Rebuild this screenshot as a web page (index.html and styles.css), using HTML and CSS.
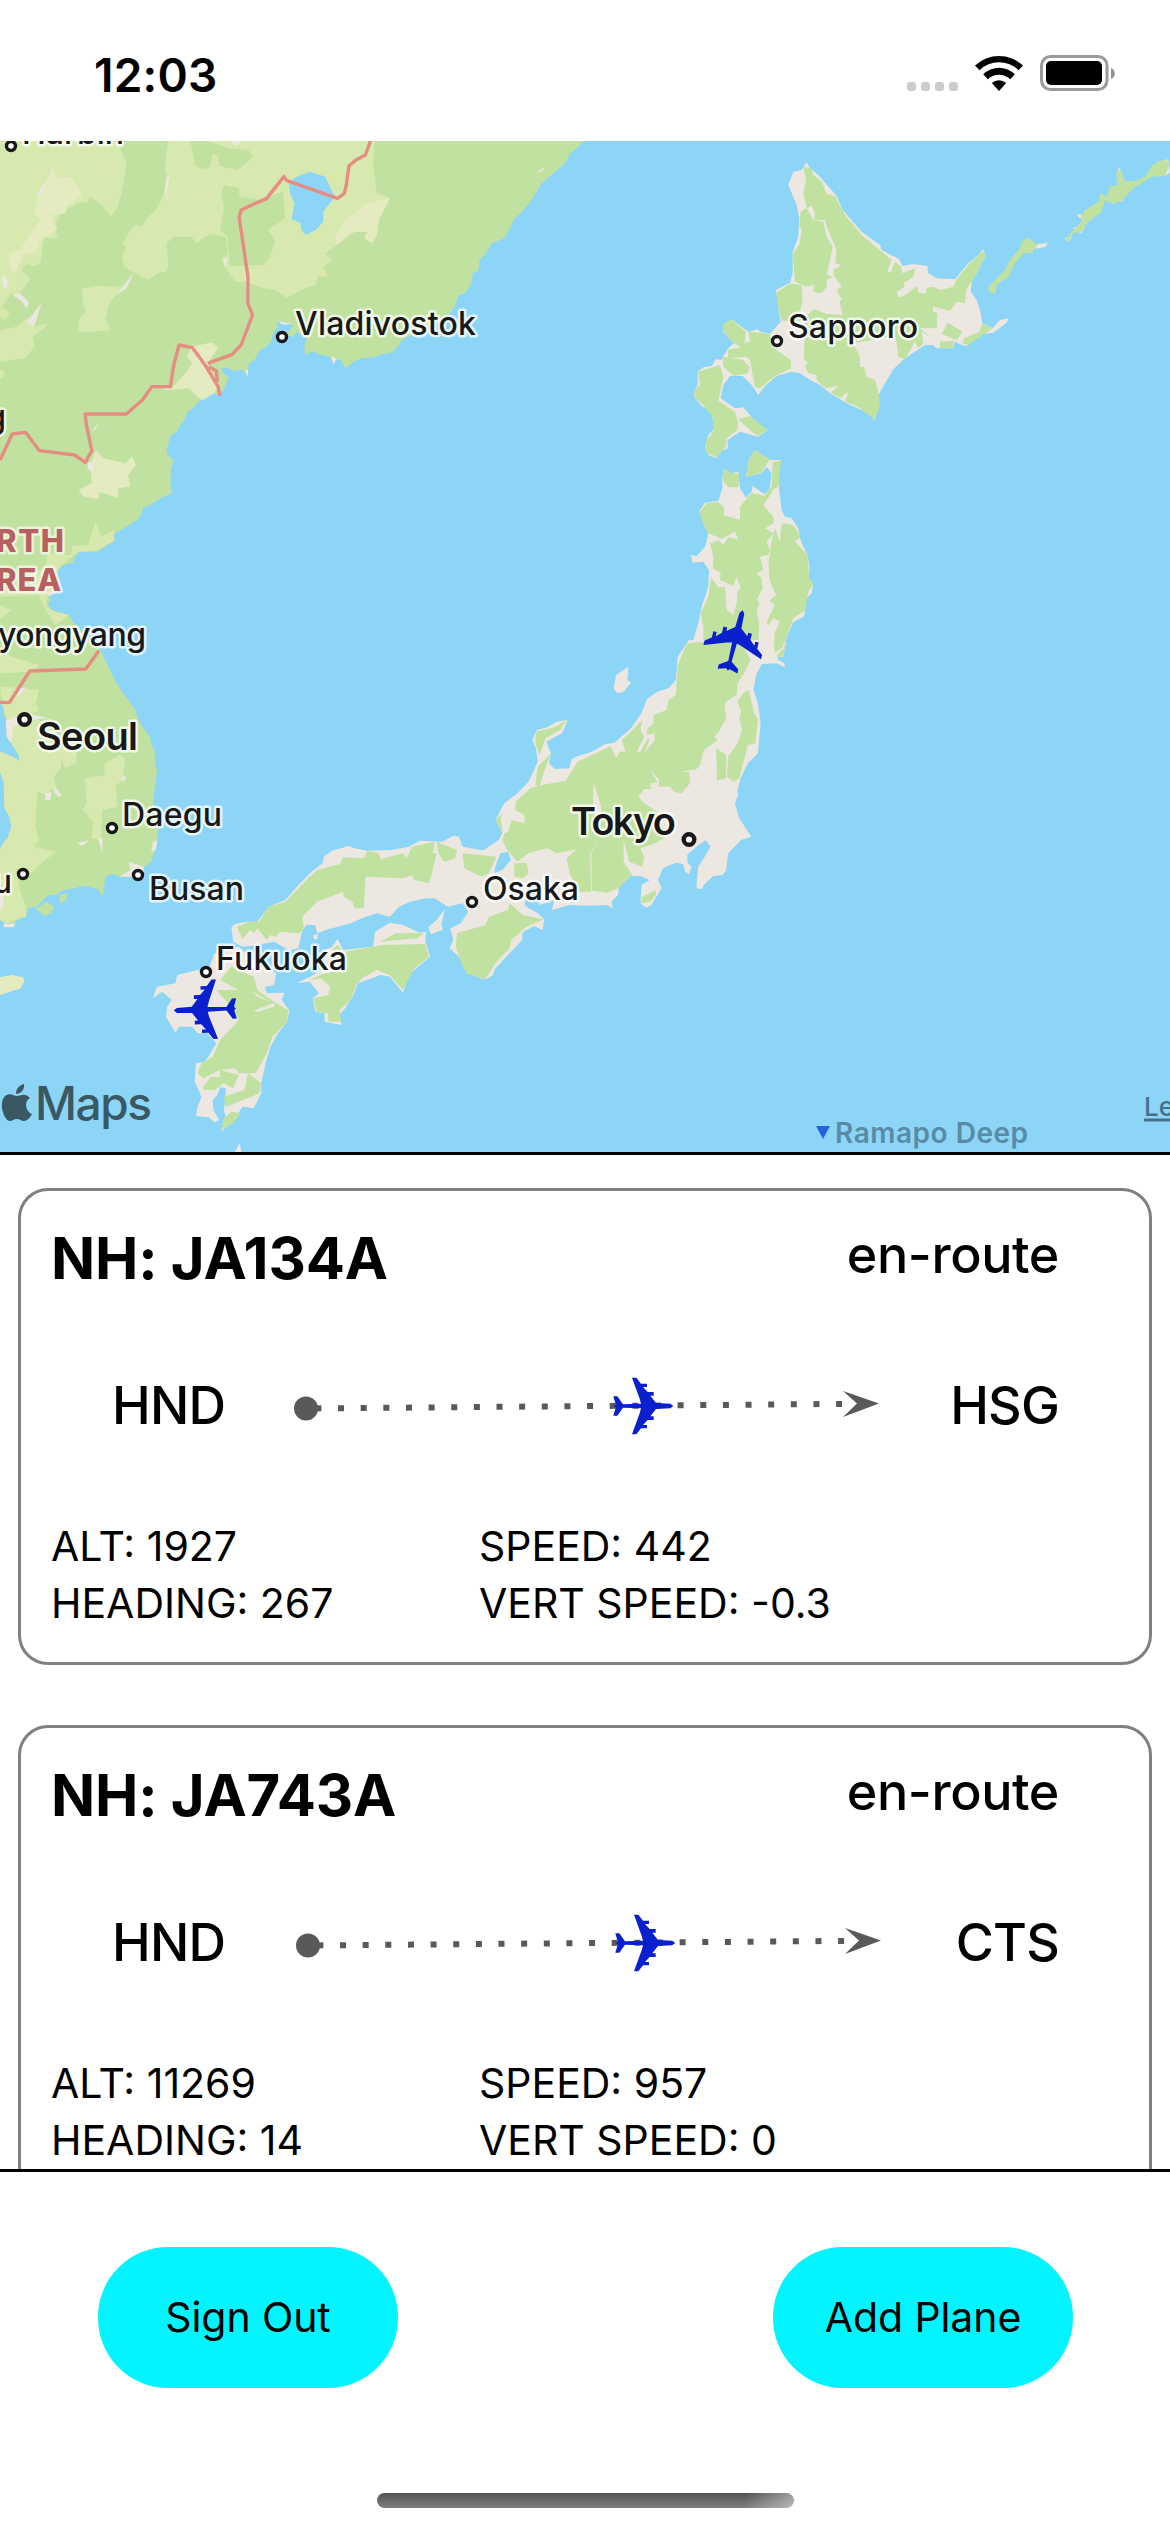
FILE: index.html
```html
<!DOCTYPE html>
<html lang="en">
<head>
<meta charset="utf-8">
<title>Flight Tracker</title>
<link rel="stylesheet" href="styles.css">
</head>
<body>
<svg class="defs" width="0" height="0" aria-hidden="true">
  <symbol id="plane" viewBox="-96 -96 192 192">
    <path d="M91 0L82-7L39-9L22-31H32V-42H14L0-57H12V-67H-6L-20-85H-33L-10-22L-6-7L-60-5L-77-29H-89L-82-5L-87 0L-82 5L-89 29H-77L-60 5L-6 7L-10 22L-33 85H-20L-6 67H12V57H0L14 42H32V31H22L39 9L82 7Z"/>
  </symbol>
  <symbol id="route" viewBox="0 0 590 60">
    <circle class="route-mark" cx="13" cy="32.500" r="12"/>
    <path class="route-line" d="M22.400 32.400L551 27.900"/>
    <path class="route-mark" d="M550 15L586 27.500L550 41L564 27.500Z"/>
    <use class="plane" href="#plane" x="318" y="-2" width="64" height="64"/>
  </symbol>
</svg>
<div class="app">
  <header class="status-bar">
    <span class="time">12:03</span>
    <svg class="status-icons" viewBox="0 0 210 40">
      <g class="signal"><rect x="1" y="28" width="9" height="9" rx="3"/><rect x="15" y="28" width="9" height="9" rx="3"/><rect x="29" y="28" width="9" height="9" rx="3"/><rect x="43" y="28" width="9" height="9" rx="3"/></g>
      <path d="M69 11.500A35 35 0 0 1 117 11.500L112.500 16.200A28 28 0 0 0 73.500 16.200ZM77.200 20.300A22.500 22.500 0 0 1 108.800 20.300L104.200 25.200A16 16 0 0 0 81.800 25.200ZM85.800 29A11 11 0 0 1 100.200 29L93 37Z"/>
      <rect class="battery-shell" x="135.500" y="2.500" width="65.500" height="33" rx="9"/>
      <rect x="140" y="7" width="56" height="24" rx="5"/>
      <path class="battery-tip" d="M205 14C210 16 210 23 205 25Z"/>
    </svg>
  </header>

  <section class="map">
    <svg class="map-canvas" viewBox="0 141 1170 1011">
      <!-- continental coast, borders and lake -->
      <g transform="translate(0 130) scale(.38265 .33333)">
        <path class="forest" d="M0 0H1550L1527 33L1487 75L1478 98L1450 125L1412 165L1400 190L1388 212L1360 250L1345 265L1330 300L1318 325L1285 340L1270 370L1253 390L1250 422L1235 430L1232 462L1215 490L1198 497L1190 525L1180 545L1150 570L1100 600L1050 630L1040 650L1022 668L1000 672L975 682L945 685L920 698L905 714L897 706L893 692L880 685L872 700L862 680L830 672L818 662L798 675L795 650L802 625L775 605L765 620L745 615L765 590L760 580L740 580L725 572L728 590L715 605L708 635L695 650L677 663L665 690L650 700L647 740L635 720L610 722L590 712L577 715L585 730L598 745L585 775L575 797L560 790L540 792L530 810L520 812L505 835L490 845L480 875L470 885L462 907L447 915L440 940L435 960L438 975L453 990L447 1020L445 1065L450 1080L445 1093L425 1100L405 1115L385 1130L375 1130L370 1150L360 1168L330 1190L298 1212L300 1230L275 1250L255 1265L208 1265L195 1282L190 1298L165 1305L148 1325L155 1350L150 1385L125 1400L132 1408L125 1425L135 1440L180 1455L190 1475L205 1490L225 1525L255 1560V1590H0Z"/>
        <path class="meadow" d="M0 33H325L315 60L330 95L325 150L310 225L290 262L270 230L235 200L230 215L200 220L160 250L140 290L152 325L115 325L105 400L90 410L70 400L55 420L80 445L65 470L45 495L30 488L5 530L25 550L15 570L0 560ZM440 33H980L975 100L985 190L1020 203L990 270L985 315L935 300L880 345L850 370L868 390L845 410L858 438L830 440L825 465L795 475L750 503L720 480L690 475L640 455L615 455L590 415L580 390L595 370L590 320L555 312L535 320L515 340L500 320L455 320L435 340L440 410L430 430L420 425L385 450L325 410L318 380L330 350L320 340L350 285L370 290L385 265L410 235L440 160L430 110ZM215 475L250 468L320 470L285 520L275 570L290 600L205 608V570L225 545L215 510ZM0 600L45 590L75 560L90 590L125 580L115 595L85 620L90 650L65 685L0 695ZM0 720L12 725L10 740L0 750ZM250 1175L265 1220L300 1200L295 1235L250 1262L205 1265L160 1305L148 1325L120 1310L125 1270L185 1275L190 1248L230 1245ZM120 1310L150 1330L150 1385L125 1400L120 1430L145 1445L180 1455L145 1485L120 1440L100 1395L0 1400V1380L90 1375L70 1340Z"/>
        <path class="meadow" d="M0 1425L30 1440L0 1470ZM0 1500L70 1530L45 1560H0Z"/>
        <path class="forest" d="M497 33H540L600 55L650 60L660 80L635 108L618 120L575 108L568 75L555 72L550 110L530 118L510 108ZM585 165L625 175V200L680 210L740 185L745 265L700 300L720 330L705 380L690 405L600 408L595 320L575 300L585 235L578 190Z"/>
        <path class="steppe" d="M138 110L150 145L185 140L215 195L175 230L170 250L135 255L150 300L110 325L95 365L60 375L40 430L25 415L22 375L55 355L75 320L105 270L90 250L95 215L110 180ZM880 345L875 320L905 270L950 225L1020 203L990 270L985 315L972 340L952 325L960 305L920 305ZM488 680L500 650L555 637L570 655L548 690L545 700L570 770L560 790L530 810L515 800L495 775L445 780L485 730L502 700ZM250 960L270 985L330 1000L345 978L355 1005L335 1035L340 1070L310 1075L308 1105L260 1085L258 1108L220 1100L205 1080L240 1060L235 1010Z"/>
        <path class="plain" d="M5 435L20 450L18 478L8 470ZM32 495L50 488L75 515L70 537L58 515ZM70 575L88 550L108 520L95 570L88 592ZM300 497L350 430L330 475ZM435 145L445 130L440 160L435 210L430 180ZM585 380L592 390L590 415L585 405ZM95 195L122 150L115 180L105 197ZM230 1000L248 990L240 1028L228 1015ZM865 680L880 685L872 703ZM640 720H648V742ZM725 572L765 582L740 584ZM425 778L440 768L445 780ZM600 33H630L618 48ZM1400 130L1425 108L1415 125ZM115 1385L150 1385L130 1398ZM238 908L258 875L250 898Z"/>
        <path class="water" d="M755 160L775 140L810 125L850 140L862 170L875 200L845 245V275L825 300L800 315L788 300L785 278L762 268L770 220L758 190Z"/>
        <path class="border" d="M968 33L955 75L930 90L912 108L905 165L900 190L882 205L750 152L742 140L697 205L630 240L625 262L648 440V520L660 555L630 645L607 673L543 700M0 990L32 912L67 907L103 962L195 975L223 997L240 962L225 880L223 852H330L372 810L397 770H445L455 700L468 645L503 653L540 712L570 770L575 797M545 710L565 722L568 755"/>
      </g>
      <!-- Korean peninsula and western Japan -->
      <g transform="translate(0 640) scale(.37309 .33333)">
        <path class="forest" d="M0 0H255L270 32L282 60L310 125L330 160L362 207L370 240L385 265L402 290L405 310L415 335V360L421 395L415 440L410 490L425 560L422 600L415 635L405 665L385 680V710H350L320 710L300 702L282 710L280 735L275 768L265 750L240 740L220 738L200 745L170 750L150 765H130L115 780L98 800L75 805L70 828L50 835L40 848L15 852L0 840V630L5 615L20 595L30 560L25 530L12 505L10 430L0 395V335L35 350L52 362L50 345L30 310L18 290L20 245L10 225L8 200L0 190ZM95 808L125 785L145 800L138 820L120 828ZM160 765L180 760L178 780L160 792Z"/>
        <path class="meadow" d="M0 20L30 50L105 75L90 95L0 100ZM0 140H40L30 160L60 145L105 150L95 190L105 210L65 235H100L205 330V370L175 385L162 350L165 380L145 410L150 440L125 460L100 455L95 560L105 600L90 620L150 635L100 680L95 690L50 720L55 760L70 800V830L15 850L0 840V630L5 615L20 595L30 560L25 530L12 505L10 430L0 395V335L35 350L52 362L50 345L30 310L18 290L20 245L8 200ZM280 370L320 345L335 355L330 415L310 440L315 500L275 510L270 600L245 595L250 545L222 510L232 490L228 415L280 405Z"/>
        <path class="plain" d="M15 240L75 220L130 235L95 238L35 260L30 310L18 290ZM320 710L350 690L345 665L385 680V710ZM148 440L165 465L158 472L143 455ZM90 448L125 460L138 455L135 480H122L120 462ZM330 408L340 412L325 430ZM262 595L275 595V638ZM410 605L422 600L418 630L405 635ZM0 765H10L8 800L0 815ZM10 852L40 850L38 862H10ZM35 150L70 142L50 170ZM207 608L240 600L220 618Z"/>
        <path class="steppe" d="M0 1012L30 1005L62 1012L66 1022L55 1045L0 1065Z"/>
        <path class="border" d="M0 187L25 188L80 93L230 87L265 32"/>
        <path class="plain" d="M1290 630L1240 620L1230 590L1215 587L1185 605L1125 602L1095 620L1050 630L985 632L950 625L935 618L890 632L868 650L865 670L835 695L800 735L765 780L720 800L690 845H660L630 852L620 862L625 905L650 920L690 915L735 905L750 915L775 930L800 925L808 880L820 855H845L850 880L880 868L940 850L970 835L1010 820L1045 830L1070 800L1100 785L1140 775H1165L1200 800L1240 790L1255 815L1235 850L1207 865L1215 900L1205 925L1230 950L1250 995L1300 1018L1400 900V640ZM1193 808L1183 850L1187 870L1155 882L1148 862L1170 840ZM840 885L852 882L850 900L840 895ZM905 897L920 930L1000 920L1005 875L1045 848L1080 855L1125 878L1142 875L1140 905L1153 950L1110 990L1095 1010L1080 1058L1045 1010L1020 1005L960 1030L945 1070L925 1105L910 1125L915 1155L870 1145V1120L845 1115L838 1075L855 1060L830 1025L795 1030L840 1005L870 980V930L890 920ZM575 940L640 920L700 980L740 1000L735 1035L710 1040L715 1060L762 1058L755 1080L775 1110L770 1145L745 1180L725 1220L712 1270L700 1330V1360L680 1405L650 1400L620 1450L592 1475L605 1430L600 1410L605 1370V1345L590 1342L582 1365L570 1380L572 1410L588 1440L575 1447L560 1432L525 1428L530 1400L540 1370L522 1325L525 1270L550 1265L580 1210L555 1180H530L515 1160H480L470 1178L445 1130L448 1100L460 1080L435 1055L410 1075L420 1040L470 1030L475 1005L530 990L560 985ZM628 1540L642 1508L648 1540Z"/>
        <path class="forest" d="M695 845L720 800L765 785L830 710L850 690L912 672L920 652L975 655L985 632L1015 640L1020 658L1080 640L1090 655L1105 620L1165 605L1160 640H1170L1160 690L1150 730L1110 720L1105 705L1080 715L980 710L975 805H950L945 785L920 770V755L850 785L810 830L815 870L800 880L750 875L740 890L725 885L715 900L690 865L680 880L670 870L650 898L635 860L670 845ZM1170 605L1225 630L1220 655L1190 665L1175 640ZM1240 640L1330 650L1310 700L1290 710L1245 685ZM1225 880L1300 855L1310 830L1365 810L1370 790L1400 825L1458 838L1410 860L1370 900L1365 925L1330 965L1300 1018L1250 1000L1230 950L1222 920ZM925 935L1025 915L1140 912L1150 950L1110 985L1080 1050L1045 1005L1010 990L970 1015L955 1035L940 1080L910 1110L915 1145H880V1120L848 1115L840 1075L880 1065L885 1040L860 1015L830 1020L870 1000L925 990ZM1020 905L1060 880H1135L1120 895ZM890 930L905 915L915 930ZM590 1020L620 980L680 1010L690 1050L740 1090L772 1110L770 1145L730 1190L715 1240L685 1300H640L630 1285L590 1290L545 1315L530 1300L540 1270L570 1250L590 1200L640 1140L620 1100L580 1050L640 1050ZM545 1340L565 1310L590 1312L590 1290L640 1305L625 1345L600 1330L575 1350H545ZM665 1300L700 1330L695 1360L640 1385L605 1400L600 1370L655 1350ZM600 1435L620 1415L645 1420L625 1450L592 1472Z"/>
        <path class="plain" d="M680 1112L735 1088V1100L690 1116ZM670 1050L725 1085L690 1070Z"/>
      </g>
      <!-- Hokkaido, Tohoku and the Kurils -->
      <g transform="translate(660 130) scale(.33333)">
        <path class="plain" d="M440 97L447 110L480 140L530 198L548 240L605 305L660 345L665 360L718 388L728 408L758 402L802 408L805 430L830 445L885 448L925 400L955 375L970 358L977 378L955 420L935 455L932 485L950 510L960 540L967 580L998 595L1020 570L1045 565L1040 578L1000 608L960 612L920 648L905 645L885 635L880 655H830L820 645H795L735 685L700 718L675 760L655 795L658 830L643 870L630 852L560 820L510 790L480 765L455 752L420 730L395 725L350 738L315 768L295 795L275 765L248 738L210 738L190 765L182 805L225 835L250 832L290 878L323 900L295 920L240 905L203 930V955L180 965L170 985L145 975L135 950L145 915L160 900V870L150 840L128 830L102 800L103 785L113 765V725L130 712L155 708L168 687L183 690L205 655L222 640L190 605L192 582L215 568L265 605L293 598L300 605L330 612L362 575L355 530L348 480L390 458L398 430V365L415 320L418 265L410 225L385 165L400 125L425 120ZM192 1018L212 1030L235 1025L240 1075L258 1103L275 1085L278 1068L312 1092L328 1080L335 1030L320 1010L305 1030L258 1040L268 985L285 960L330 990H363L355 1025L358 1085L365 1140L375 1160L395 1165L415 1195L420 1225L430 1250L443 1275L448 1310L445 1350L460 1362L455 1390L440 1405L432 1460L400 1475L380 1520L370 1580H75L77 1555L100 1530L115 1480L125 1430L145 1370L147 1320L130 1295L98 1298L93 1275L110 1278L135 1250L145 1212L130 1170L118 1143L135 1118L175 1112L187 1075V1040ZM1120 344L1163 338L1158 350L1130 356ZM1213 325L1235 320L1225 336ZM1250 255L1265 252L1262 266ZM1370 125L1378 113L1385 130ZM1490 95L1525 88L1530 128L1515 138ZM1240 292L1275 290L1265 308L1245 305ZM1370 205L1392 208L1385 216Z"/>
        <path class="forest" d="M430 110L455 115L460 135L485 155L500 192L525 198L555 255L605 315L695 390L682 425L692 428L705 395L722 408L728 430L765 415L760 440L730 460L735 470L710 485L715 500H728L772 468L775 490H798L800 473L820 470L840 480L880 470L890 448L930 400L970 362L977 378L935 455L920 475L915 520L890 515L870 542L820 530L818 545L832 550L830 595H780L815 625L785 605L790 640L775 655L765 635L735 688L715 680L710 640L690 560L690 620L580 640L600 680V710H612L620 740L645 750L658 800V835L643 868L590 828L555 815L565 785L540 805L512 788L535 768L495 775L470 750V735L445 730L435 710L442 695L432 690L435 560L462 537L500 552L548 555L538 515L545 508L530 480L545 470L520 435V420L545 405L525 400L530 360L500 290L495 270H462L465 250L455 228L440 235L430 190L438 150ZM422 245L440 233L460 270L490 275L500 320L518 350L510 390L500 435L518 440L500 450V470L485 490L460 485L462 465L440 470L405 455L398 370L418 345L425 300L418 285ZM348 490L390 460L425 465L428 510L420 545L425 572H365L355 530ZM190 582L215 568L258 605L253 640L270 635L265 605L330 612L335 650L392 690L393 715L345 738L300 775L285 772L278 735L270 690L260 680L205 685L203 660L242 652L222 640L192 605ZM187 680L250 690L270 712L262 730L220 738L190 710ZM115 725L180 705L190 740L175 812L225 845L235 880L232 900L200 925L198 950L170 982L140 970L137 935L160 905L158 860L130 825L103 800L105 780L120 765ZM235 868L270 858L322 900L295 918L275 905ZM863 578L908 605L890 630L845 612ZM840 635L882 632L880 655H840ZM965 580L998 595L925 645L908 640L912 625L960 605ZM985 470L1035 420L1050 390L1080 355L1085 335L1102 322L1133 345L1115 368L1090 370L1065 400L1045 440L1010 465L1005 490L988 488ZM1215 330L1225 335L1240 308L1265 305L1280 280L1325 245L1335 210L1360 222L1385 212L1420 175L1475 140L1515 138L1528 105L1520 90L1500 92L1478 105L1455 140L1425 153H1393L1385 122L1370 120V150L1375 165L1350 170L1340 200L1320 190L1315 215L1275 240L1262 260L1265 275L1240 300Z"/>
        <path class="forest" d="M190 1018L212 1030L238 1030L235 1072H205L188 1050ZM268 985L285 960L328 990L305 1028L258 1040ZM338 995L363 992L355 1070L340 1078L328 1100L310 1125L340 1160L342 1180L315 1195L340 1210L320 1235L330 1260L325 1275L300 1280L310 1320L290 1330L305 1345L308 1375L290 1410L298 1415L290 1450L298 1480L292 1580H75L85 1540H130V1490L122 1450L145 1400L153 1342L175 1372L195 1370L200 1440L220 1455L232 1410L230 1385L242 1375L230 1340L220 1368L180 1350L182 1328L158 1315L160 1280L150 1240L175 1230L190 1245L205 1222L235 1228L225 1205L185 1227L145 1210L128 1180L120 1145L140 1120L175 1115L193 1135L190 1155L240 1170V1130L275 1088L312 1098L335 1068ZM365 1180L400 1185L422 1220L405 1235L443 1275L447 1340L460 1362L445 1385L435 1440L400 1465L380 1520L370 1580H345L343 1512L360 1475L340 1465L325 1487L320 1475L345 1425L328 1412L348 1395L328 1350L325 1300L335 1230L345 1195L360 1235Z"/>
      </g>
      <!-- central Honshu -->
      <g transform="translate(480 640) scale(.37309 .33333)">
        <path class="plain" d="M818 0L815 25L795 45L800 60L815 70L818 83L795 70L755 72L740 105L733 150L745 190L752 250L745 340L718 370L700 410L690 450L692 465L683 490L695 535L727 590L700 600L665 640L660 690L650 705L625 708L600 735L595 747L580 745L585 680L600 655L618 620L605 600L580 620L555 645L557 670L567 680L560 703L550 695L545 672L525 668L490 685L477 720L487 745L470 775L460 795L445 803L430 790L433 735L455 720L430 708H405L372 742L370 765L352 785L357 805L340 795L290 797L240 795L192 810L200 780L160 795L145 730L125 740L120 797L155 820L172 838L168 870L145 858L125 870L88 895L80 920L60 945L45 970L35 1005L15 1018L0 1015L-20 900V635L10 630L50 600L60 580L42 540L65 490L100 460L130 425L155 365L150 325L140 300L152 270L180 262L205 245L235 240L220 280L178 305L190 340L185 370L200 387L240 385L245 358L262 348L300 335L335 312L360 308L405 265L435 215L447 178L475 155L505 145L525 120L530 50L560 0ZM398 80L395 120L405 128L385 155L368 160L358 145L365 105Z"/>
        <path class="forest" d="M555 10L600 5H700L725 60L708 100L690 130L688 165L660 185L655 205L660 235L640 275L628 290L638 300L600 330L590 375L580 388L535 395L560 395L563 430L540 460L520 455L510 440H478L480 420L455 388L475 425L455 432L460 447H440L425 470L440 490L475 515L480 530L500 590L470 610L430 625L440 650L435 680L400 665L385 600V665L408 705L370 745L340 758L300 752L298 640L318 600L295 640L298 755H265L240 700L232 655L258 628L205 640L180 625L130 640L100 665L70 625L60 600L65 580L75 575L85 540L120 550L118 525L95 510V485L135 445L165 435L230 422L262 365L350 318L365 355L375 335H390L380 300L400 280L435 240L430 270L440 290L420 335L430 335L450 295L455 300L440 340L468 300V280L445 285L450 265L465 250V225L500 210L505 180L525 165L530 75ZM720 150L735 220L745 240L738 310L718 315L695 415L680 425L662 410L665 350L690 310L702 270L695 235L700 215L690 185L705 160ZM633 325L660 345V415L635 422ZM788 0H818L810 25L790 38ZM435 770L470 750L472 765L455 785L430 790ZM150 275L200 262L232 240L215 270L175 295L160 345L148 310ZM190 340L170 400L160 440L148 435L155 380ZM42 540L65 515L55 535L62 580ZM92 670L125 668L130 700L115 715L92 710ZM-46 640L44 650L24 700L4 710L-41 685ZM-61 880L14 855L24 830L75 810L80 790L114 825L172 838L124 860L84 900L79 925L44 965L14 1018L-36 1000L-56 950Z"/>
        <path class="plain" d="M305 430L325 500L320 570L303 500Z"/>
        <path class="water" d="M55 640L75 635L83 660L60 690L38 700L42 675Z"/>
      </g>

      <g class="dots">
        <circle cx="11" cy="146" r="4.500"/><circle cx="282" cy="337" r="4.500"/><circle cx="777" cy="341" r="4.500"/>
        <circle cx="112" cy="828" r="4.500"/><circle cx="138" cy="875" r="4.500"/><circle cx="23" cy="874" r="4.500"/>
        <circle cx="472" cy="902" r="4.500"/><circle cx="206" cy="972" r="4.500"/>
        <circle class="capital" cx="24.500" cy="719.500" r="5.300"/><circle class="capital" cx="689" cy="839.500" r="5.300"/>
      </g>
      <g class="city">
        <text x="22" y="144" textLength="102">Harbin</text>
        <text x="295" y="335" textLength="181">Vladivostok</text>
        <text x="788" y="338" textLength="130">Sapporo</text>
        <text x="6" y="428" text-anchor="end">g</text>
        <text x="-2" y="646" textLength="148">yongyang</text>
        <text x="122" y="826" textLength="100">Daegu</text>
        <text x="149" y="900" textLength="95">Busan</text>
        <text x="12" y="893" text-anchor="end">u</text>
        <text x="483" y="900" textLength="96">Osaka</text>
        <text x="216" y="970" textLength="131">Fukuoka</text>
        <text class="big" x="37" y="750" textLength="101">Seoul</text>
        <text class="big" x="571" y="835" textLength="105">Tokyo</text>
      </g>
      <g class="country">
        <text x="-4" y="552" textLength="68">RTH</text>
        <text x="-4" y="591" textLength="65">REA</text>
      </g>
      <path class="trench" d="M816 1126H830L823 1139Z"/>
      <text class="sea" x="835" y="1143" textLength="193">Ramapo Deep</text>
      <g class="brand">
        <path d="M24 1084C25 1090 20 1094 16 1094C16 1088 20 1085 24 1084ZM30 1098C24 1101 25 1111 32 1114C30 1118 27 1121 24 1121C21 1121 20 1119 17 1119C14 1119 12 1121 10 1121C4 1121-2 1103 5 1096C10 1092 14 1096 17 1096C20 1096 25 1092 30 1098Z"/>
        <text x="35" y="1120" textLength="117">Maps</text>
      </g>
      <text class="legal" x="1144" y="1116">Legal</text>
      <path class="legal-line" d="M1144 1120H1170"/>
      <use class="plane" href="#plane" x="-33.500" y="-33.500" width="67" height="67" transform="translate(735 641) rotate(-76)"/>
      <use class="plane" href="#plane" x="-33.500" y="-33.500" width="67" height="67" transform="translate(205.500 1009.500) rotate(178)"/>
    </svg>
  </section>

  <main class="flights">
    <article class="card">
      <div class="card-head"><h2>NH: JA134A</h2><span class="state">en-route</span></div>
      <div class="route"><span>HND</span><svg class="route-art"><use href="#route"/></svg><span>HSG</span></div>
      <div class="stats"><span>ALT: 1927</span><span>SPEED: 442</span><span>HEADING: 267</span><span>VERT SPEED: -0.3</span></div>
    </article>
    <article class="card">
      <div class="card-head"><h2>NH: JA743A</h2><span class="state">en-route</span></div>
      <div class="route"><span>HND</span><svg class="route-art"><use href="#route"/></svg><span>CTS</span></div>
      <div class="stats"><span>ALT: 11269</span><span>SPEED: 957</span><span>HEADING: 14</span><span>VERT SPEED: 0</span></div>
    </article>
  </main>

  <footer class="actions">
    <div class="buttons"><button>Sign Out</button><button>Add Plane</button></div>
    <div class="home-indicator"></div>
  </footer>
</div>
</body>
</html>
```
FILE: styles.css
```css
* { box-sizing: border-box; }
body { margin: 0; background: #fff; color: #000; font-family: Inter, "Liberation Sans", sans-serif; }
.defs { display: block; }
.app { width: 1170px; height: 2532px; display: flex; flex-direction: column; overflow: hidden; }

.status-bar { height: 141px; flex: none; padding: 0 54px 0 94px; display: flex; align-items: center; justify-content: space-between; }
.time { font-size: 46px; font-weight: 600; line-height: 56px; padding-top: 8px; letter-spacing: .2px; }
.status-icons { width: 210px; height: 40px; margin-top: 7px; }
.signal { fill: #ccc; }
.battery-shell { fill: none; stroke: #9b9b9b; stroke-width: 3; }
.battery-tip { fill: #8f8f8f; }

.map { height: 1014px; flex: none; border-bottom: 3px solid #000; background: #8dd5f6; }
.map-canvas { display: block; width: 1170px; height: 1011px; overflow: hidden; }
.forest { fill: #c1e1a0; }
.meadow { fill: #d7e9af; }
.steppe { fill: #e4ebc0; }
.plain { fill: #ece8e1; }
.water { fill: #8dd5f6; }
.border { fill: none; stroke: #e58d83; stroke-width: 3.4; stroke-linejoin: round; vector-effect: non-scaling-stroke; }
.plane { fill: #0a1fce; }
.dots circle { fill: #fff; stroke: #181818; stroke-width: 3.4; }
.dots .capital { stroke-width: 4.4; }
.city text { font-size: 32px; font-weight: 500; fill: #181818; stroke: rgba(255,255,255,.75); stroke-width: 5; stroke-linejoin: round; paint-order: stroke; }
.city .big { font-size: 38px; font-weight: 600; }
.country text { font-size: 31px; font-weight: 800; fill: #b86060; stroke: rgba(255,255,255,.65); stroke-width: 5; stroke-linejoin: round; paint-order: stroke; }
.trench { fill: #2463e0; }
.sea { font-size: 28px; font-weight: 600; fill: #588ba6; }
.brand { fill: #3a5864; }
.brand text { font-size: 46px; font-weight: 500; }
.legal { font-size: 26px; font-weight: 500; fill: #44718a; }
.legal-line { stroke: #44718a; stroke-width: 3; }

.flights { height: 1014px; flex: none; padding: 33px 18px 0; overflow: hidden; display: flex; flex-direction: column; gap: 60px; }
.card { height: 477px; flex: none; border: 3px solid #808080; border-radius: 30px; padding: 29px 90px 0 30px; }
.card-head { height: 76px; display: flex; justify-content: space-between; }
h2 { margin: 0; font-size: 58px; line-height: 76px; font-weight: 700; letter-spacing: -.2px; }
.state { font-size: 52px; line-height: 70px; font-weight: 500; letter-spacing: -.4px; }
.route { display: flex; align-items: center; justify-content: space-between; height: 66px; margin-top: 77px; padding-left: 61px; font-size: 52px; font-weight: 500; line-height: 66px; letter-spacing: -.8px; }
.route-art { width: 590px; height: 60px; overflow: visible; }
.route-mark { fill: #595959; }
.route-line { fill: none; stroke: #595959; stroke-width: 6; stroke-dasharray: 6 16.640; }
.stats { margin-top: 79px; display: grid; grid-template-columns: 428px 1fr; grid-auto-rows: 57px; font-size: 41px; line-height: 57px; white-space: nowrap; }

.actions { flex: 1; border-top: 3px solid #000; padding: 75px 97px 24px 98px; display: flex; flex-direction: column; justify-content: space-between; align-items: center; }
.buttons { width: 100%; display: flex; justify-content: space-between; }
button { width: 300px; height: 141px; padding: 0 0 2px; border: 0; border-radius: 70px; background: #04f4ff; color: #000; font-family: inherit; font-size: 41px; letter-spacing: -.1px; }
.home-indicator { width: 417px; height: 15px; border-radius: 8px; background: linear-gradient(100deg, transparent 88%, rgba(255,255,255,.45)), linear-gradient(#525252, #808080); }
```
